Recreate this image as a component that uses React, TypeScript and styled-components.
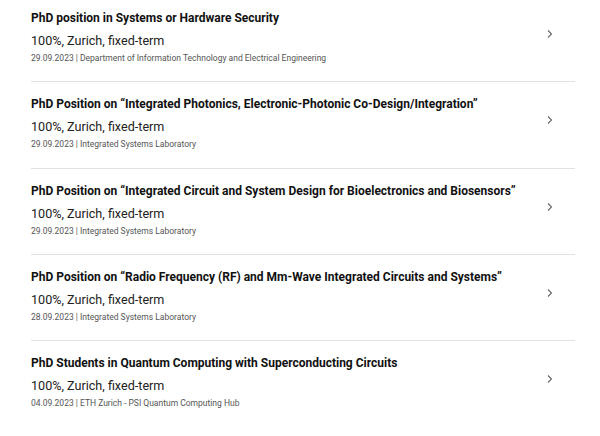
import React from 'react'
import styled, { createGlobalStyle } from 'styled-components'

const GlobalStyle = createGlobalStyle`
  html, body {
    margin: 0;
    padding: 0;
    background: #ffffff;
  }
  body {
    font-family: Roboto, "Liberation Sans", Arial, sans-serif;
  }
`

interface Job {
  title: string
  date: string
  unit: string
}

const jobs: Job[] = [
  {
    title: 'PhD position in Systems or Hardware Security',
    date: '29.09.2023',
    unit: 'Department of Information Technology and Electrical Engineering'
  },
  {
    title: 'PhD Position on \u201cIntegrated Photonics, Electronic-Photonic Co-Design/Integration\u201d',
    date: '29.09.2023',
    unit: 'Integrated Systems Laboratory'
  },
  {
    title: 'PhD Position on \u201cIntegrated Circuit and System Design for Bioelectronics and Biosensors\u201d',
    date: '29.09.2023',
    unit: 'Integrated Systems Laboratory'
  },
  {
    title: 'PhD Position on \u201cRadio Frequency (RF) and Mm-Wave Integrated Circuits and Systems\u201d',
    date: '28.09.2023',
    unit: 'Integrated Systems Laboratory'
  },
  {
    title: 'PhD Students in Quantum Computing with Superconducting Circuits',
    date: '04.09.2023',
    unit: 'ETH Zurich - PSI Quantum Computing Hub'
  }
]

const List = styled.ul`
  list-style: none;
  margin: -4px 0 0 31px;
  padding: 0;
  width: 544px;
`

const Row = styled.li`
  display: flex;
  align-items: center;
  padding: 14px 0 17.3px;
  border-bottom: 1px solid #e2e2e2;

  &:last-child {
    border-bottom: none;
  }
`

const Body = styled.div`
  flex: 1;
  display: flex;
  flex-direction: column;
`

const Title = styled.div`
  font-size: 12px;
  line-height: 16px;
  font-weight: 700;
  color: #111111;
`

const Terms = styled.div`
  margin-top: 6px;
  font-size: 12.6px;
  line-height: 18px;
  color: #222222;
`

const Meta = styled.div`
  margin-top: 2px;
  font-size: 8.5px;
  line-height: 12px;
  color: #555555;
`

const Chevron = styled.svg`
  flex: none;
  width: 6px;
  height: 8px;
  margin-right: 22px;
  margin-top: -6px;
`

export default function App(): React.ReactElement {
  return (
    <>
      <GlobalStyle />
      <List>
        {jobs.map(job => (
          <Row key={job.title}>
            <Body>
              <Title>{job.title}</Title>
              <Terms>100%, Zurich, fixed-term</Terms>
              <Meta>
                {job.date} | {job.unit}
              </Meta>
            </Body>
            <Chevron viewBox="0 0 6 8">
              <path d="M1 0.5 L4.5 4 L1 7.5" fill="none" stroke="#666" strokeWidth="1.1" />
            </Chevron>
          </Row>
        ))}
      </List>
    </>
  )
}
